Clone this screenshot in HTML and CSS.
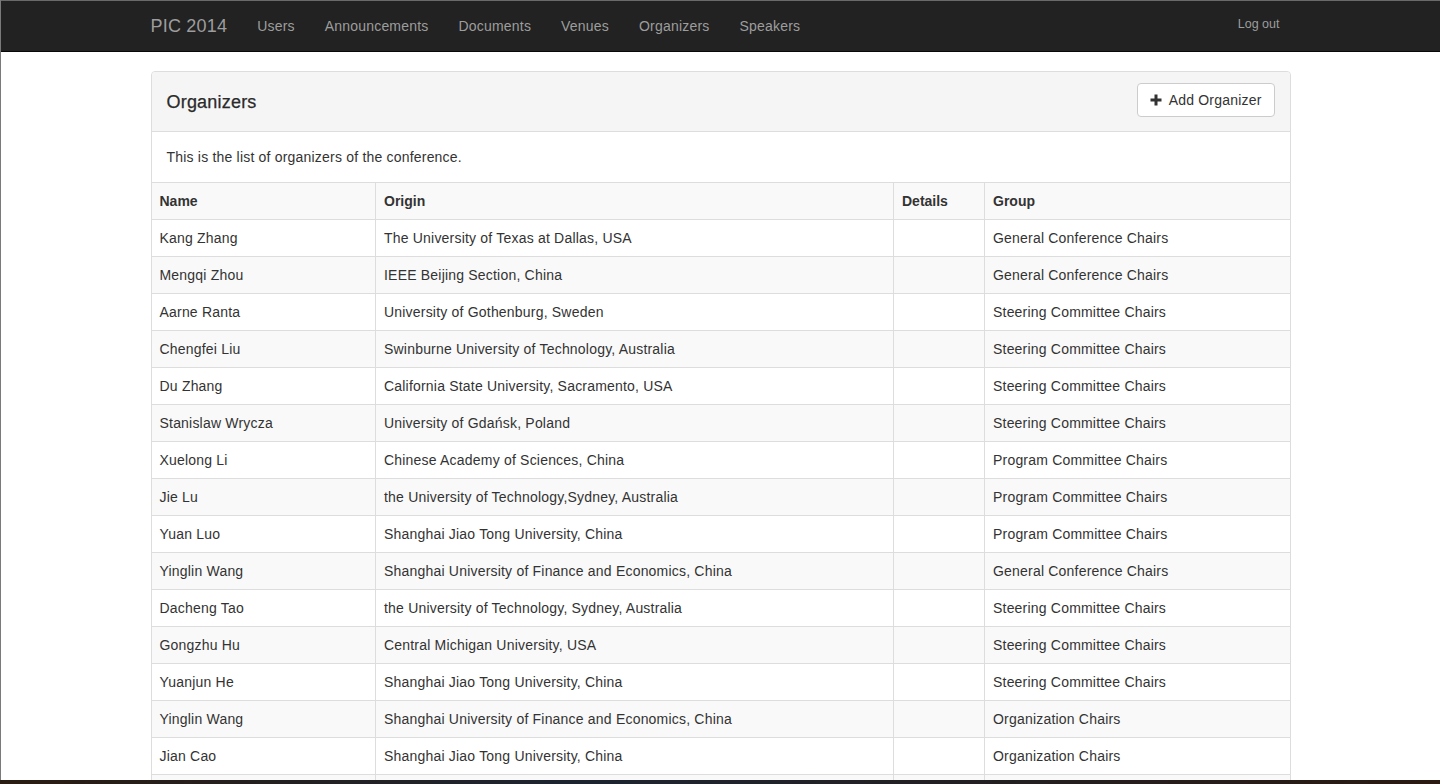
FILE: index.html
```html
<!DOCTYPE html>
<html>
<head>
<meta charset="utf-8">
<title>Organizers - PIC 2014</title>
<link rel="stylesheet" href="styles.css">
</head>
<body>
<div class="screen">
  <div class="window">
    <nav class="navbar">
      <div class="nav-inner">
        <a class="brand" href="#">PIC 2014</a>
        <ul class="nav-links">
          <li><a href="#">Users</a></li>
          <li><a href="#">Announcements</a></li>
          <li><a href="#">Documents</a></li>
          <li><a href="#">Venues</a></li>
          <li><a href="#">Organizers</a></li>
          <li><a href="#">Speakers</a></li>
        </ul>
        <a class="logout" href="#">Log out</a>
      </div>
    </nav>
    <main class="container">
      <section class="panel">
        <div class="panel-heading">
          <h3 class="panel-title">Organizers</h3>
          <button class="btn">
            <svg class="plus" width="12" height="12" viewBox="0 0 12 12"><rect x="4.5" y="0.5" width="3" height="11" fill="#333"/><rect x="0.5" y="4.5" width="11" height="3" fill="#333"/></svg>
            Add Organizer
          </button>
        </div>
        <div class="panel-body">This is the list of organizers of the conference.</div>
        <table class="table">
          <colgroup>
            <col class="c-name"><col class="c-origin"><col class="c-details"><col class="c-group">
          </colgroup>
          <tbody>
            <tr class="head"><th>Name</th><th>Origin</th><th>Details</th><th>Group</th></tr>
            <tr><td>Kang Zhang</td><td>The University of Texas at Dallas, USA</td><td></td><td>General Conference Chairs</td></tr>
            <tr><td>Mengqi Zhou</td><td>IEEE Beijing Section, China</td><td></td><td>General Conference Chairs</td></tr>
            <tr><td>Aarne Ranta</td><td>University of Gothenburg, Sweden</td><td></td><td>Steering Committee Chairs</td></tr>
            <tr><td>Chengfei Liu</td><td>Swinburne University of Technology, Australia</td><td></td><td>Steering Committee Chairs</td></tr>
            <tr><td>Du Zhang</td><td>California State University, Sacramento, USA</td><td></td><td>Steering Committee Chairs</td></tr>
            <tr><td>Stanislaw Wrycza</td><td>University of Gdańsk, Poland</td><td></td><td>Steering Committee Chairs</td></tr>
            <tr><td>Xuelong Li</td><td>Chinese Academy of Sciences, China</td><td></td><td>Program Committee Chairs</td></tr>
            <tr><td>Jie Lu</td><td>the University of Technology,Sydney, Australia</td><td></td><td>Program Committee Chairs</td></tr>
            <tr><td>Yuan Luo</td><td>Shanghai Jiao Tong University, China</td><td></td><td>Program Committee Chairs</td></tr>
            <tr><td>Yinglin Wang</td><td>Shanghai University of Finance and Economics, China</td><td></td><td>General Conference Chairs</td></tr>
            <tr><td>Dacheng Tao</td><td>the University of Technology, Sydney, Australia</td><td></td><td>Steering Committee Chairs</td></tr>
            <tr><td>Gongzhu Hu</td><td>Central Michigan University, USA</td><td></td><td>Steering Committee Chairs</td></tr>
            <tr><td>Yuanjun He</td><td>Shanghai Jiao Tong University, China</td><td></td><td>Steering Committee Chairs</td></tr>
            <tr><td>Yinglin Wang</td><td>Shanghai University of Finance and Economics, China</td><td></td><td>Organization Chairs</td></tr>
            <tr><td>Jian Cao</td><td>Shanghai Jiao Tong University, China</td><td></td><td>Organization Chairs</td></tr>
            <tr class="empty"><td></td><td></td><td></td><td></td></tr>
          </tbody>
        </table>
      </section>
    </main>
  </div>
</div>
</body>
</html>
```

FILE: styles.css
```css
* { box-sizing: border-box; }
html, body { margin: 0; padding: 0; }
body {
  font-family: "Liberation Sans", Arial, sans-serif;
  font-size: 14px;
  line-height: 20px;
  letter-spacing: 0.2px;
  color: #333;
  background: #241a14;
}
.screen {
  height: 784px;
  overflow: hidden;
  background: linear-gradient(90deg, #2a1c12 0%, #1d2430 40%, #2a1a12 100%);
}
.window {
  height: 780px;
  overflow: hidden;
  background: #fff;
  border-left: 1px solid #7a7a7a;
}
.navbar {
  height: 52px;
  background: #222;
  border-top: 1px solid #6a6a6a;
  border-bottom: 1px solid #080808;
}
.nav-inner {
  width: 1140px;
  margin: 0 auto;
  display: flex;
  align-items: flex-start;
  height: 50px;
}
.brand {
  font-size: 18px;
  line-height: 20px;
  color: #9d9d9d;
  text-decoration: none;
  padding: 15px 15px 15px 0;
}
.nav-links {
  list-style: none;
  margin: 0;
  padding: 0;
  display: flex;
}
.nav-links a {
  display: block;
  padding: 15px 15px;
  color: #9d9d9d;
  text-decoration: none;
  font-size: 14px;
  line-height: 20px;
}
.logout {
  margin-left: auto;
  margin-right: 11px;
  padding-top: 14px;
  font-size: 12.5px;
  line-height: 18px;
  letter-spacing: 0;
  color: #9d9d9d;
  text-decoration: none;
}
.container {
  width: 1140px;
  margin: 19px auto 0;
}
.panel {
  border: 1px solid #ddd;
  border-radius: 4px;
  background: #fff;
  overflow: hidden;
}
.panel-heading {
  height: 60px;
  padding: 0 15px 0 15px;
  background: #f5f5f5;
  border-bottom: 1px solid #ddd;
  display: flex;
  align-items: center;
  justify-content: space-between;
}
.panel-title {
  margin: 0;
  font-size: 18px;
  font-weight: normal;
  line-height: 20px;
  color: #2a2a2a;
  -webkit-text-stroke: 0.25px #2a2a2a;
}
.btn {
  height: 34px;
  padding: 6px 12px;
  font-family: inherit;
  font-size: 14px;
  letter-spacing: 0.2px;
  line-height: 20px;
  color: #333;
  background: #fff;
  border: 1px solid #ccc;
  border-radius: 4px;
  display: flex;
  align-items: center;
  gap: 7px;
  margin-top: -3px;
}
.plus { display: block; }
.panel-body {
  padding: 15px 15px;
  line-height: 20px;
}
.table {
  width: 100%;
  border-collapse: collapse;
  table-layout: fixed;
}
.c-name { width: 224px; }
.c-origin { width: 518px; }
.c-details { width: 91px; }
.c-group { width: 305px; }
.table th, .table td {
  padding: 8px;
  height: 37px;
  line-height: 20px;
  text-align: left;
  border: 1px solid #ddd;
  white-space: nowrap;
  overflow: hidden;
}
.table th { font-weight: bold; letter-spacing: 0; }
.table tr > :first-child { border-left: 0; }
.table tr > :last-child { border-right: 0; }
.table tr:nth-child(odd) > * { background: #f9f9f9; }
```
